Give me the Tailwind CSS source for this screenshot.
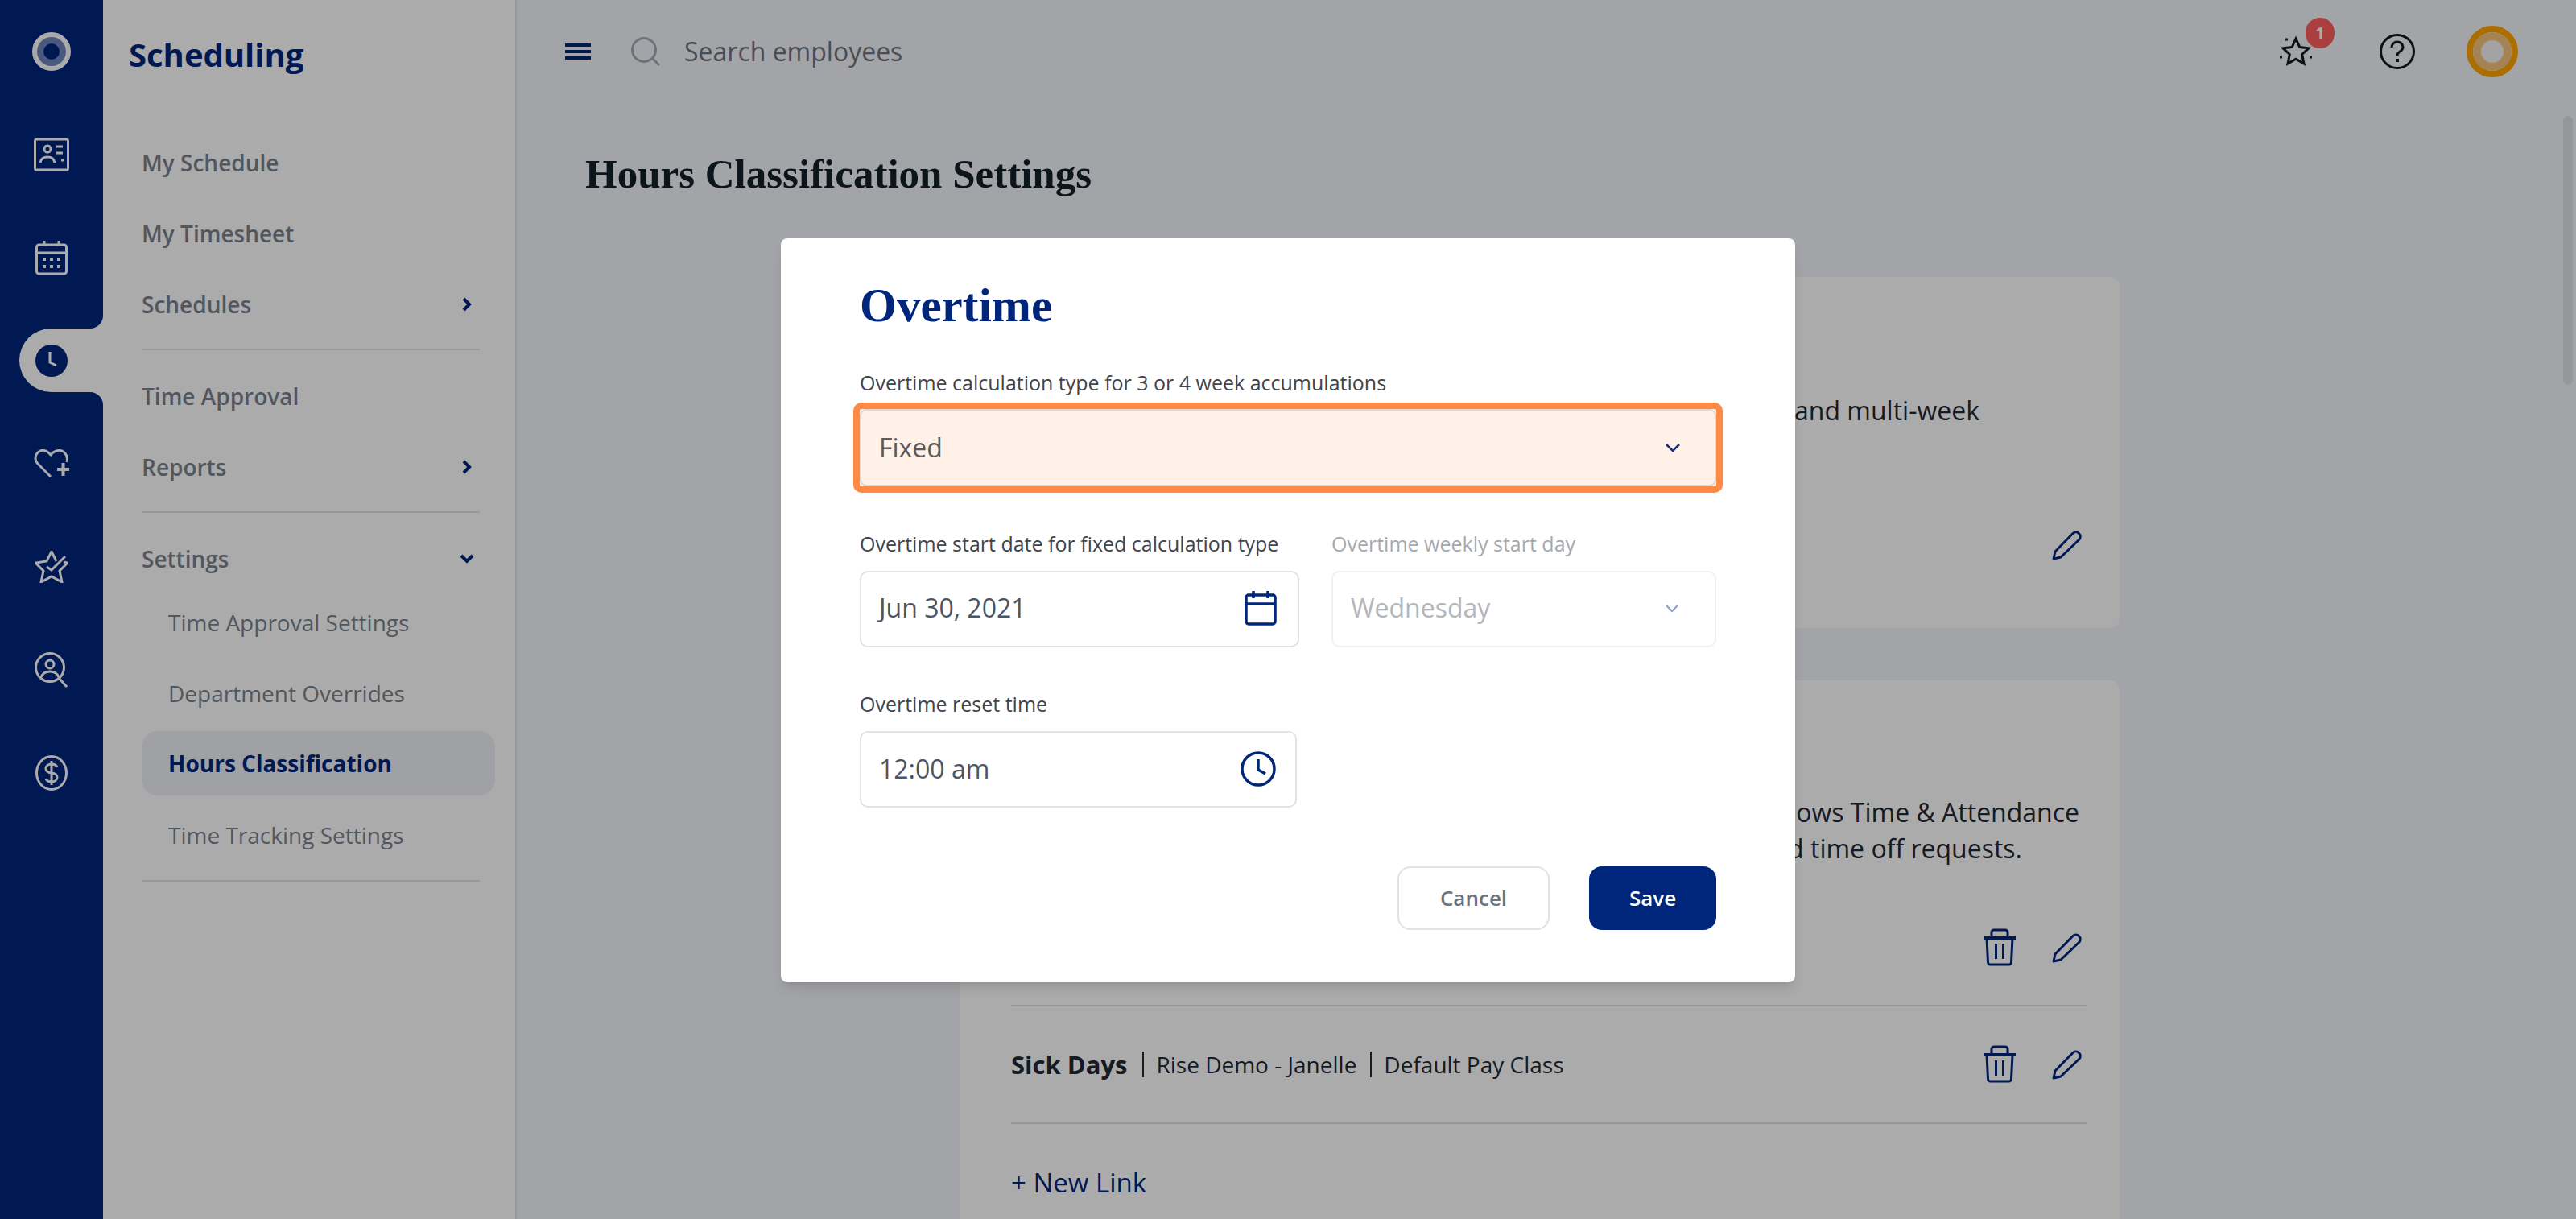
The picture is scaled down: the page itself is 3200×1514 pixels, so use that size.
<!DOCTYPE html>
<html lang="en">
<head>
    <meta charset="UTF-8">
    <title>Hours Classification Settings</title>
    <script src="https://cdn.jsdelivr.net/npm/@tailwindcss/browser@4"></script>
</head>
<body class="font-['Open_Sans',sans-serif]">
<div class="relative flex h-[1514px] w-[3200px] overflow-hidden bg-[#f4f5f9]">

    <!-- icon rail -->
    <aside class="flex w-[128px] shrink-0 flex-col bg-white text-white">
        <div class="h-[408px] rounded-br-[16px] bg-[#00267c]">
            <div class="flex h-[128px] items-center justify-center">
                <div class="flex h-[48px] w-[48px] items-center justify-center rounded-full border-[6px] border-white bg-[#6f87bd]">
                    <div class="h-[20px] w-[20px] rounded-full bg-[#00267c]"></div>
                </div>
            </div>
            <div class="flex h-[128px] items-center justify-center">
                <svg class="h-[44px] w-[44px]" viewBox="0 0 44 44" fill="none" stroke="currentColor" stroke-width="3">
                    <rect x="1.5" y="3" width="41" height="38" rx="2"/>
                    <circle cx="17" cy="15" r="4"/>
                    <path d="M8 32c1-5 5-7 9-7s8 2 9 7"/>
                    <path d="M28 12h8M28 20h8M34 29h3"/>
                </svg>
            </div>
            <div class="flex h-[128px] items-center justify-center">
                <svg class="h-[44px] w-[40px]" viewBox="0 0 40 44" fill="none" stroke="currentColor" stroke-width="3">
                    <rect x="1.5" y="6" width="37" height="36" rx="3"/>
                    <path d="M1.5 16h37M11 1v7M29 1v7"/>
                    <path d="M9 24h4M18 24h4M27 24h4M9 33h4M18 33h4M27 33h4" stroke-width="4"/>
                </svg>
            </div>
        </div>
        <div class="h-[79px] bg-[#00267c]">
            <div class="ml-[24px] flex h-full items-center rounded-l-[40px] bg-white pl-[20px]">
                <svg class="h-[40px] w-[40px]" viewBox="0 0 40 40">
                    <circle cx="20" cy="20" r="20" fill="#00267c"/>
                    <path d="M18 9v13l8 4" fill="none" stroke="#fff" stroke-width="3"/>
                </svg>
            </div>
        </div>
        <div class="flex-1 rounded-tr-[16px] bg-[#00267c] pt-[25px]">
            <div class="flex h-[128px] items-center justify-center">
                <svg class="h-[36px] w-[44px]" viewBox="0 0 44 36" fill="none" stroke="currentColor" stroke-width="3">
                    <path d="M21 34 5 18C1 14 1 8 5 4c4-4 10-3 13 0l3 3 3-3c4-3 10-4 14 0 3 3 4 8 3 12"/>
                    <path d="M29 25h15M36.500 17v16" stroke-width="4"/>
                </svg>
            </div>
            <div class="flex h-[128px] items-center justify-center">
                <svg class="h-[40px] w-[42px]" viewBox="0 0 42 40" fill="none" stroke="currentColor" stroke-width="3">
                    <path d="M27 13 21 1l-6 12-14 2 10 10-3 14 13-7 13 7-3-14 10-10-5-1"/>
                    <path d="M15 20l6 4 17-17"/>
                </svg>
            </div>
            <div class="flex h-[128px] items-center justify-center">
                <svg class="h-[44px] w-[42px]" viewBox="0 0 42 44" fill="none" stroke="currentColor" stroke-width="3">
                    <circle cx="19" cy="19" r="17.500"/>
                    <circle cx="19" cy="15" r="5"/>
                    <path d="M8 31c2-5 6-7 11-7s9 2 11 7M30 32l10 11"/>
                </svg>
            </div>
            <div class="flex h-[128px] items-center justify-center">
                <svg class="h-[44px] w-[40px]" viewBox="0 0 40 44" fill="none" stroke="currentColor" stroke-width="3">
                    <ellipse cx="20" cy="22" rx="18.500" ry="20.500"/>
                    <path d="M27 15c-1-3-4-4-7-4-4 0-7 2-7 5.500s3 5 7 5.500 7 2 7 5.500-3 5.500-7 5.500c-3 0-6-1-7-4M20 7v30"/>
                </svg>
            </div>
        </div>
    </aside>

    <!-- section nav -->
    <nav class="w-[514px] shrink-0 border-r-2 border-[#e2e3e6] bg-white pl-[48px] pr-[25px] text-[28px] text-[#7b828e]">
        <div class="-ml-[16px] flex h-[136px] items-center text-[40px] font-bold text-[#00267c]">Scheduling</div>
        <a class="mt-[22px] flex h-[88px] items-center font-semibold">My Schedule</a>
        <a class="flex h-[88px] items-center font-semibold">My Timesheet</a>
        <a class="flex h-[88px] items-center justify-between pr-[28px] font-semibold">Schedules
            <svg class="h-[20px] w-[14px] text-[#00267c]" viewBox="0 0 14 20" fill="none" stroke="currentColor" stroke-width="4"><path d="M3 3l7 7-7 7"/></svg>
        </a>
        <div class="mr-[19px] mt-[11px] h-[2px] bg-[#e2e3e6]"></div>
        <a class="mt-[13px] flex h-[88px] items-center font-semibold">Time Approval</a>
        <a class="flex h-[88px] items-center justify-between pr-[28px] font-semibold">Reports
            <svg class="h-[20px] w-[14px] text-[#00267c]" viewBox="0 0 14 20" fill="none" stroke="currentColor" stroke-width="4"><path d="M3 3l7 7-7 7"/></svg>
        </a>
        <div class="mr-[19px] mt-[11px] h-[2px] bg-[#e2e3e6]"></div>
        <a class="mt-[13px] flex h-[88px] items-center justify-between pr-[25px] font-semibold">Settings
            <svg class="h-[14px] w-[20px] text-[#00267c]" viewBox="0 0 20 14" fill="none" stroke="currentColor" stroke-width="4"><path d="M3 3l7 7 7-7"/></svg>
        </a>
        <a class="-mt-[9px] flex h-[88px] items-center pl-[33px]">Time Approval Settings</a>
        <a class="flex h-[88px] items-center pl-[33px]">Department Overrides</a>
        <a class="mb-[5px] mt-[3px] flex h-[80px] items-center rounded-[20px] bg-[#eef0f5] pl-[33px] font-bold text-[#00267c]">Hours Classification</a>
        <a class="flex h-[88px] items-center pl-[33px]">Time Tracking Settings</a>
        <div class="mr-[19px] mt-[12px] h-[2px] bg-[#e2e3e6]"></div>
    </nav>

    <!-- main area -->
    <main class="flex-1">
        <header class="flex h-[128px] items-center pl-[60px] pr-[72px]">
            <svg class="h-[20px] w-[32px] text-[#00267c]" viewBox="0 0 32 20" fill="currentColor"><path d="M0 0h32v4H0zM0 8h32v4H0zM0 16h32v4H0z"/></svg>
            <svg class="ml-[50px] h-[36px] w-[36px] text-[#a4aab3]" viewBox="0 0 36 36" fill="none" stroke="currentColor" stroke-width="3"><circle cx="16" cy="16" r="14.500"/><path d="M26 26l9 9"/></svg>
            <span class="ml-[30px] text-[32px] text-[#6f747c]">Search employees</span>
            <div class="relative ml-auto h-[40px] w-[40px]">
                <svg class="h-[40px] w-[40px] text-[#11181f]" viewBox="0 0 40 40" fill="none" stroke="currentColor" stroke-width="3">
                    <path d="M20 4l4.800 10.500 11.200 1.300-8.300 7.700 2.300 11.500-10-5.800-10 5.800 2.300-11.500-8.300-7.700 11.200-1.300z"/>
                    <path d="M7 5h3M0 27h3M37 27h3" stroke-width="3"/>
                </svg>
                <span class="absolute -top-[22px] left-[32px] flex h-[38px] w-[36px] items-center justify-center rounded-full bg-[#ff5f5f] text-[20px] font-bold text-white">1</span>
            </div>
            <svg class="ml-[84px] h-[44px] w-[44px] text-[#11181f]" viewBox="0 0 44 44" fill="none" stroke="currentColor" stroke-width="3">
                <circle cx="22" cy="22" r="20.500"/>
                <path d="M15 17c0-4 3-7 7-7s7 3 7 6.500-3 5-5 6.500c-1.500 1-2 2-2 4"/>
                <path d="M22 31v4" stroke-width="4"/>
            </svg>
            <div class="ml-[64px] flex h-[64px] w-[64px] items-center justify-center rounded-full border-[8px] border-[#ffa500] bg-[#ffffff]">
                <div class="flex h-[48px] w-[48px] items-center justify-center rounded-full bg-[#f7c47f]">
                    <div class="h-[28px] w-[28px] rounded-full bg-[#f2f2f2]"></div>
                </div>
            </div>
        </header>

        <h1 class="ml-[85px] mt-[60px] h-[56px] font-['Liberation_Serif',serif] text-[51px] leading-[56px] font-bold text-[#14202b]">Hours Classification Settings</h1>

        <div class="ml-[550px] mt-[100px] flex w-[1441px] flex-col gap-[65px]">
            <section class="h-[436px] rounded-[12px] bg-white pl-[64px] pr-[41px] pt-[144px] text-[32px] leading-[44px] text-[#1f2933]">
                <p class="mr-[133px] text-right">and multi-week</p>
                <div class="mt-[126px] flex justify-end pr-[5px]">
                    <svg class="h-[38px] w-[38px] text-[#00267c]" viewBox="0 0 38 38" fill="none" stroke="currentColor" stroke-width="3" stroke-linejoin="round"><path d="M2 36l2-9L26 4.500a5.500 5.500 0 0 1 8 7.500L11 34z"/></svg>
                </div>
            </section>
            <section class="h-[800px] rounded-[12px] bg-white pl-[64px] pr-[41px] pt-[141px] text-[32px] leading-[45px] text-[#1f2933]">
                <p class="mr-[9px] text-right">allows Time &amp; Attendance</p>
                <p class="mr-[80px] text-right">and time off requests.</p>
                <div class="mt-[30px] flex h-[144px] items-center justify-end gap-[45px] border-b-2 border-[#e2e3e6] pr-[5px]">
                    <svg class="h-[48px] w-[40px] text-[#00267c]" viewBox="0 0 40 48" fill="none" stroke="currentColor" stroke-width="3"><path d="M0 12h40" stroke-width="4"/><path d="M10 12V5a3 3 0 0 1 3-3h14a3 3 0 0 1 3 3v7M4 12l1.500 30a3 3 0 0 0 3 3h23a3 3 0 0 0 3-3L36 12M15.500 19v19M24.500 19v19"/></svg>
                    <svg class="h-[38px] w-[38px] text-[#00267c]" viewBox="0 0 38 38" fill="none" stroke="currentColor" stroke-width="3" stroke-linejoin="round"><path d="M2 36l2-9L26 4.500a5.500 5.500 0 0 1 8 7.500L11 34z"/></svg>
                </div>
                <div class="flex h-[146px] items-center border-b-2 border-[#e2e3e6] pr-[5px] text-[28px]">
                    <span class="text-[31px] font-bold">Sick Days</span>
                    <span class="ml-[19px] mr-[15px] h-[32px] w-[2px] bg-[#1f2933]"></span>Rise Demo - Janelle<span class="ml-[17px] mr-[15px] h-[32px] w-[2px] bg-[#1f2933]"></span>Default Pay Class
                    <div class="ml-auto flex items-center gap-[45px]">
                        <svg class="h-[48px] w-[40px] text-[#00267c]" viewBox="0 0 40 48" fill="none" stroke="currentColor" stroke-width="3"><path d="M0 12h40" stroke-width="4"/><path d="M10 12V5a3 3 0 0 1 3-3h14a3 3 0 0 1 3 3v7M4 12l1.500 30a3 3 0 0 0 3 3h23a3 3 0 0 0 3-3L36 12M15.500 19v19M24.500 19v19"/></svg>
                        <svg class="h-[38px] w-[38px] text-[#00267c]" viewBox="0 0 38 38" fill="none" stroke="currentColor" stroke-width="3" stroke-linejoin="round"><path d="M2 36l2-9L26 4.500a5.500 5.500 0 0 1 8 7.500L11 34z"/></svg>
                    </div>
                </div>
                <div class="mt-[50px] text-[33px] font-medium text-[#00267c]">+ New Link</div>
            </section>
        </div>
    </main>

    <!-- page scrollbar -->
    <div class="absolute right-[4px] top-[144px] h-[334px] w-[12px] rounded-full bg-[#dfe1e4]"></div>

    <!-- modal backdrop -->
    <div class="absolute inset-0 bg-black/33"></div>

    <!-- overtime modal -->
    <div class="absolute left-[970px] top-[296px] h-[924px] w-[1260px] rounded-[8px] bg-white px-[98px] pt-[48px] shadow-lg">
        <h2 class="h-[70px] font-['Liberation_Serif',serif] text-[59px] leading-[70px] font-bold text-[#00267c]">Overtime</h2>

        <label class="mt-[43px] block h-[36px] text-[25px] leading-[36px] font-medium text-[#3f454d]">Overtime calculation type for 3 or 4 week accumulations</label>
        <div class="relative mt-[15px] flex h-[96px] items-center justify-between rounded-[8px] border-2 border-[#e0e2e6] pl-[22px] pr-[42px] text-[32px] text-[#4b5563]">
            Fixed
            <svg class="h-[12px] w-[20px] text-[#00267c]" viewBox="0 0 20 12" fill="none" stroke="currentColor" stroke-width="2.500"><path d="M2 2l8 8 8-8"/></svg>
            <div class="absolute -inset-[10px] rounded-[10px] border-[8px] border-[#ff8a45] bg-[#ff7a1a]/10"></div>
        </div>

        <div class="mt-[53px] grid grid-cols-[546px_478px] gap-x-[40px]">
            <div>
                <label class="block h-[36px] text-[25px] leading-[36px] font-medium text-[#3f454d]">Overtime start date for fixed calculation type</label>
                <div class="mt-[16px] flex h-[95px] items-center justify-between rounded-[10px] border-2 border-[#e0e2e6] pb-[3px] pl-[22px] pr-[26px] text-[32px] text-[#4b5563]">
                    Jun 30, 2021
                    <svg class="h-[44px] w-[40px] text-[#00267c]" viewBox="0 0 40 44" fill="none" stroke="currentColor" stroke-width="3.500"><rect x="2" y="6" width="36" height="36" rx="3"/><path d="M2 17h36M11 1v9M29 1v9"/></svg>
                </div>
            </div>
            <div>
                <label class="block h-[36px] text-[25px] leading-[36px] font-medium text-[#a6a9ad]">Overtime weekly start day</label>
                <div class="mt-[16px] flex h-[95px] items-center justify-between rounded-[10px] border-2 border-[#f0f1f3] pb-[3px] pl-[22px] pr-[44px] text-[32px] text-[#b4b6b9]">
                    Wednesday
                    <svg class="h-[11px] w-[18px] text-[#8d9cc7]" viewBox="0 0 18 11" fill="none" stroke="currentColor" stroke-width="2"><path d="M2 2l7 7 7-7"/></svg>
                </div>
            </div>
        </div>

        <label class="mt-[52px] block h-[36px] text-[25px] leading-[36px] font-medium text-[#3f454d]">Overtime reset time</label>
        <div class="mt-[16px] flex h-[95px] w-[543px] items-center justify-between rounded-[10px] border-2 border-[#e0e2e6] pb-[2px] pl-[22px] pr-[24px] text-[32px] text-[#4b5563]">
            12:00 am
            <svg class="h-[44px] w-[44px] text-[#00267c]" viewBox="0 0 44 44" fill="none" stroke="currentColor" stroke-width="3.500"><circle cx="22" cy="22" r="20"/><path d="M22 10v13l9 5"/></svg>
        </div>

        <div class="mt-[73px] flex justify-end gap-[49px]">
            <button class="h-[79px] w-[189px] rounded-[16px] border-2 border-[#e0e2e6] bg-white text-[26px] font-semibold text-[#6b7280]">Cancel</button>
            <button class="h-[79px] w-[158px] rounded-[16px] bg-[#00267c] text-[26px] font-semibold text-white">Save</button>
        </div>
    </div>
</div>
</body>
</html>
